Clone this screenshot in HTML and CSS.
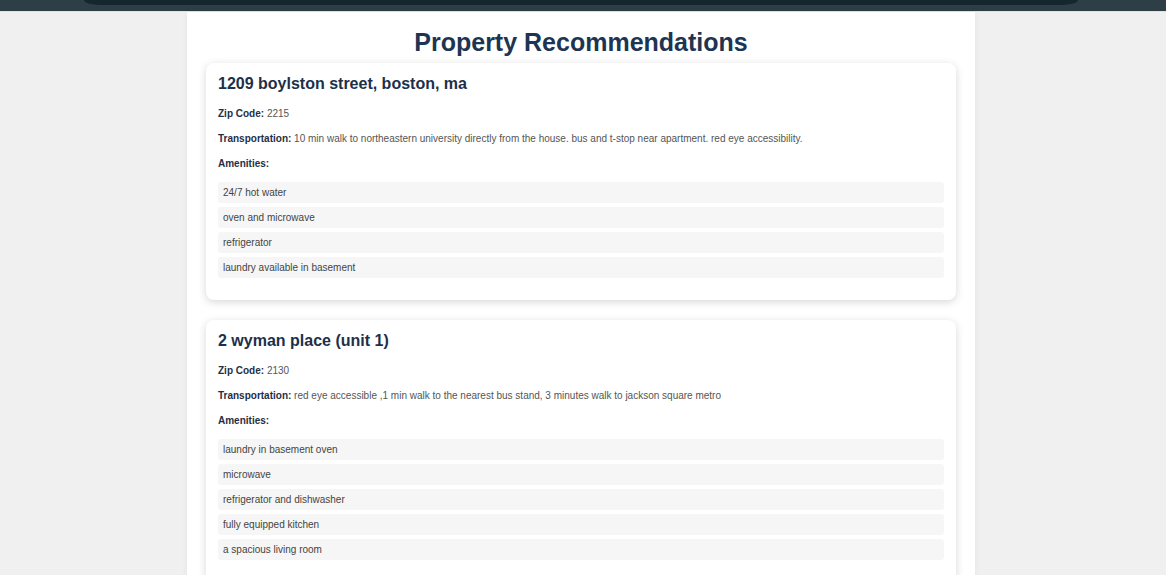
FILE: index.html
```html
<!DOCTYPE html>
<html lang="en">
<head>
<meta charset="utf-8">
<title>Property Recommendations</title>
<link rel="stylesheet" href="styles.css">
</head>
<body>
<header class="topbar"><div class="topbar-pill"></div></header>
<main class="container">
  <h1 class="page-title">Property Recommendations</h1>
  <section class="card">
    <h2 class="card-title">1209 boylston street, boston, ma</h2>
    <p class="field"><strong>Zip Code:</strong> 2215</p>
    <p class="field"><strong>Transportation:</strong> 10 min walk to northeastern university directly from the house. bus and t-stop near apartment. red eye accessibility.</p>
    <p class="field"><strong>Amenities:</strong></p>
    <ul class="amenities">
      <li>24/7 hot water</li>
      <li>oven and microwave</li>
      <li>refrigerator</li>
      <li>laundry available in basement</li>
    </ul>
  </section>
  <section class="card">
    <h2 class="card-title">2 wyman place (unit 1)</h2>
    <p class="field"><strong>Zip Code:</strong> 2130</p>
    <p class="field"><strong>Transportation:</strong> red eye accessible ,1 min walk to the nearest bus stand, 3 minutes walk to jackson square metro</p>
    <p class="field"><strong>Amenities:</strong></p>
    <ul class="amenities">
      <li>laundry in basement oven</li>
      <li>microwave</li>
      <li>refrigerator and dishwasher</li>
      <li>fully equipped kitchen</li>
      <li>a spacious living room</li>
    </ul>
  </section>
</main>
</body>
</html>
```
FILE: styles.css
```css
html, body {
  margin: 0;
  padding: 0;
}
body {
  background: #f0f0f0;
  font-family: "Liberation Sans", Arial, sans-serif;
  color: #555;
}
.topbar {
  height: 11px;
  background: #2e3e46;
  border-bottom: 1px solid #dfe3e4;
  padding: 0 88px 0 84px;
  box-sizing: content-box;
}
.topbar-pill {
  height: 5px;
  background: #16262e;
  border-radius: 0 0 16px 16px / 0 0 5px 5px;
}
.container {
  width: 750px;
  margin: 0 auto;
  padding: 0 19px 40px;
  background: #fff;
  box-shadow: 0 0 6px rgba(0, 0, 0, 0.06);
  position: relative;
  left: -2px;
  display: flex;
  flex-direction: column;
  gap: 20px;
}
.page-title {
  margin: 0;
  padding-top: 15px;
  margin-bottom: -14px;
  text-align: center;
  font-size: 25px;
  line-height: 30px;
  font-weight: bold;
  color: #1d3552;
}
.card {
  background: #fff;
  border-radius: 8px;
  box-shadow: 0 2px 8px rgba(0, 0, 0, 0.16);
  padding: 11px 12px 22px;
  display: flex;
  flex-direction: column;
}
.card-title {
  margin: 0 0 13px;
  font-size: 16px;
  line-height: 20px;
  font-weight: bold;
  color: #1d3048;
}
.field {
  margin: 0 0 12px;
  font-size: 10px;
  line-height: 13px;
  color: #555;
}
.field strong {
  color: #1f2f45;
}
.amenities {
  list-style: none;
  margin: 0;
  padding: 0;
  display: flex;
  flex-direction: column;
  gap: 4px;
}
.amenities li {
  background: #f6f6f6;
  border-radius: 3px;
  height: 21px;
  line-height: 21px;
  padding: 0 5px;
  font-size: 10px;
  color: #444;
}
```
